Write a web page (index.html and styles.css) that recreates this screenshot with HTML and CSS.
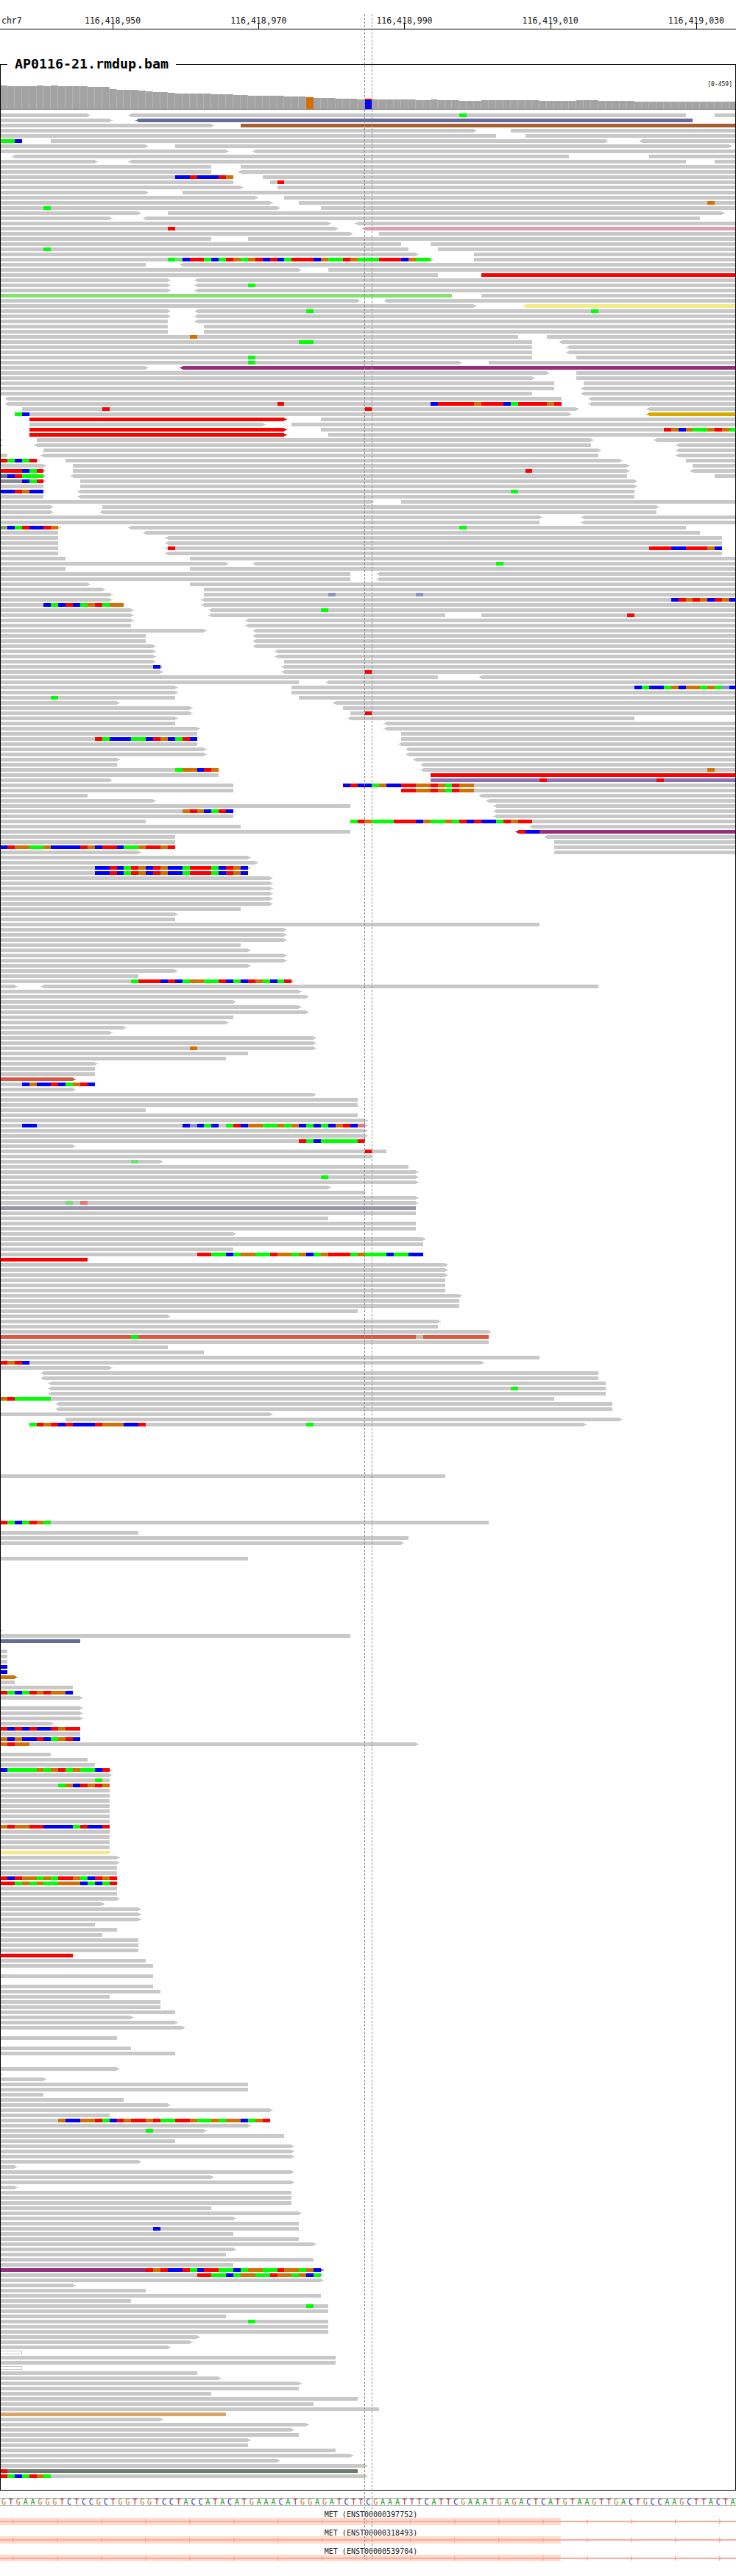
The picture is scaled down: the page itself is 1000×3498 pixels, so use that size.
FILE: index.html
```html
<!DOCTYPE html>
<html lang="en">
<head>
<meta charset="utf-8">
<title>AP0116-21.rmdup.bam</title>
<link rel="stylesheet" href="styles.css">
</head>
<body>
<main class="page">
  <header class="ruler">
    <span class="chrom">chr7</span>
    <span class="tick">116,418,950</span>
    <span class="tick">116,418,970</span>
    <span class="tick">116,418,990</span>
    <span class="tick">116,419,010</span>
    <span class="tick">116,419,030</span>
  </header>
  <section class="track">
    <h1 class="track-title">AP0116-21.rmdup.bam</h1>
    <span class="range">[0-459]</span>
    <svg id="coverage" class="coverage" width="998" height="61"></svg>
    <svg id="reads" class="reads" width="998" height="3213"></svg>
  </section>
  <div id="sequence" class="sequence"></div>
  <div class="transcript">
    <div class="gene-label">MET (ENST00000397752)</div>
    <svg class="gene" width="1000" height="10"></svg>
  </div>
  <div class="transcript">
    <div class="gene-label">MET (ENST00000318493)</div>
    <svg class="gene" width="1000" height="10"></svg>
  </div>
  <div class="transcript">
    <div class="gene-label">MET (ENST00000539704)</div>
    <svg class="gene gene-short" width="1000" height="9"></svg>
  </div>
  <div class="cursor cursor-a"></div>
  <div class="cursor cursor-b"></div>
</main>
<script src="app.js"></script>
</body>
</html>
```
FILE: styles.css
```css
html, body { margin: 0; padding: 0; background: #fff; }
.page {
  position: relative;
  width: 1000px;
  height: 3498px;
  overflow: hidden;
  background: #fff;
}
.ruler {
  display: flex;
  height: 39px;
  border-bottom: 1px solid #000;
  font: 11.5px/1 "DejaVu Sans Mono", monospace;
  color: #111;
}
.chrom {
  flex: 0 0 54px;
  padding: 23px 0 0 2px;
  box-sizing: border-box;
}
.tick {
  position: relative;
  flex: 0 0 198.2px;
  padding-top: 23px;
  box-sizing: border-box;
  text-align: center;
  white-space: nowrap;
}
.tick::after {
  content: "";
  position: absolute;
  left: 50%;
  bottom: 0;
  width: 1px;
  height: 7px;
  background: #000;
}
.track {
  position: relative;
  margin-top: 47px;
  height: 3295px;
  box-sizing: border-box;
  border: 1px solid #000;
}
.track-title {
  position: absolute;
  left: 9px;
  top: -13px;
  margin: 0;
  padding: 0 10px;
  background: #fff;
  font: bold 18.3px/24px "DejaVu Sans Mono", monospace;
  color: #000;
  white-space: nowrap;
}
.range {
  position: absolute;
  right: 4px;
  top: 22px;
  font: 8px/10px "DejaVu Sans Mono", monospace;
  color: #111;
}
.coverage, .reads { display: block; shape-rendering: crispEdges; }
.reads { margin-top: 5px; }
.sequence {
  display: flex;
  margin-top: 10px;
  height: 9px;
  border-top: 1px solid #aaa;
  border-bottom: 1px solid #aaa;
  font: 10px/9px "DejaVu Sans Mono", monospace;
}
.base { flex: 0 0 9.91px; text-align: center; }
.base-A { color: #1d9a1d; }
.base-C { color: #2a2aa5; }
.base-G { color: #a9752f; }
.base-T { color: #b02020; }
.transcript { margin-top: 5px; }
.sequence + .transcript { margin-top: 6px; }
.gene-label {
  height: 10px;
  font: 10px/12px "DejaVu Sans Mono", monospace;
  color: #222;
  text-align: center;
  padding-left: 8px;
  white-space: nowrap;
}
.gene { display: block; }
.cursor {
  position: absolute;
  top: 19px;
  width: 1px;
  height: 3456px;
  background: repeating-linear-gradient(to bottom, #868686 0, #868686 3px, transparent 3px, transparent 5px);
}
.cursor-a { left: 495px; }
.cursor-b { left: 505px; background: repeating-linear-gradient(to bottom, #969696 0, #969696 3px, transparent 3px, transparent 5px); }
```
FILE: app.js
```js
var W = 9.91;
var PAL = {r:'#ff0000',g:'#00ff00',b:'#0000ff',o:'#d17105',L:'#6ee26e',P:'#8f8fd6',K:'#e87878',T:'#c8b8a0',S:'#667088',Y:'#8b8b9e',O:'#88a070'};
var READ = {pu:'#962e80',pk:'#dda0b4',br:'#a65e2e',sl:'#666b9b',go:'#d9ab00',lg:'#85e070',re:'#ff0000',ye:'#f3ea8c',la:'#8a73b8',lr:'#de5540',gp:'#9a94aa',ta:'#dca36a',dg:'#6b7a6b',og:'#d17105',bl:'#0000ff',rg:'#ff0000'};
var GRAY = '#c8c8c8';

/* rows 0-14 and 51+ are written in 1/1.568 px units, rows 15-50 in whole bases */
var UNITS = {
0:'0-188> <278-1460 978:g 1521-E',1:'0-234> <295-1475=sl',2:'0-450> 513-E=br',3:'0-1010> 1087-E',4:'0-1055 1118-E',
5:'0-47 0:ggb 108-1290> <1365-E',6:'0-310> 373-1553>',7:'0-481> <544-E',8:'<31-1210 1381-E',9:'0-203> <280-1460 1521-E',
10:'0-450 513-E',11:'0-450 <513-E',12:'0-497 373:bbrbbbro 558-E',13:'0-497 574-E 590:r',14:'0-513> 590-E',
51:'0-1137> 1226-E',52:'0-1179 1242-E',53:'0-1179 <1242-E',54:'0-1134 <1242-E',55:'<16-1195 <1257-E',
56:'<16-1195 590:r 916:brrrrrorrrbgrrrror <1257-E',57:'47-1226> 218:r 777:r <1381-E',58:'31-1210> 31:gb <1381-E=go',
59:'63-605>=re 684-E',60:'63-560> 621-E',61:'63-605>=re 684-E 1413:roboggorog',62:'63-605>=re 699-E',
63:'0-0> 78-1260> <1397-E',64:'0-0> <78-1258 <1443-E',65:'93-1273> <1443-E',66:'0-16 <93-1273 <1443-E',
67:'0-78> 0:rgbgr 140-1322> 1460-E',68:'0-93> 155-1335> 1475-E',69:'0-93> 0:rrrbgr 155-1335> 1118:r <1475-E',
70:'0-93> 0:Sbrggg <155-1335 1521-E',71:'0-93> 0:YYYbgr 171-1350>',72:'0-93 171-1350>',73:'0-93 0:bbrobb <171-1350 1087:g',
74:'0-93 <171-1350',75:'0-793> 855-E',76:'0-109> 218-1397>',77:'0-109> <218-1397',78:'0-1149> <1242-E',79:'0-1149 <1242-E',
80:'0-124> 0:Obgrbbro <280-1460 978:g',81:'0-124 <310-1490',82:'0-124 <357-1537',83:'0-124 <357-1537',
84:'0-124 <357-1537 358:r 1381:rrrbbrrrob',85:'0-124 <357-1537',86:'0-140 403-E',87:'0-481> <544-E 1055:g',88:'0-140 403-E',
89:'0-745 <808-E',90:'0-745 <808-E',91:'0-187> 403-E',92:'0-218> 434-E',93:'0-234> 434-E 699:P 884:P',
94:'0-234> <434-E 1428:brorobrob',95:'0-263 93:bgbrbgorgoo <434-E',96:'0-280> <450-E 684:g',97:'0-280> <450-947 1024-E 1334:r',
98:'0-280> <528-E',99:'0-279 <528-E',100:'0-435> <544-E',101:'0-310 <544-E',102:'0-310 <544-E',103:'0-326> <544-E',
104:'0-326> <590-E',105:'0-326> <590-E',106:'0-326> 605-E',107:'0-342> 326:b <605-E',108:'0-342> <605-E 777:r',
109:'0-931 <1024-E',110:'0-637 <699-E',111:'0-373> 621-E 1350:bgbbgoboogogPb',112:'0-373> 621-E',113:'0-373 108:g 637-E',
114:'0-249> <714-E',115:'0-403> 730-E',116:'0-403> 745-E 777:r',117:'0-373> <745-1350',118:'0-373 <823-E',119:'0-419> <823-E',
120:'0-419 855-E',121:'0-419 202:rgbbbggbrobgrb 855-E',122:'0-419 <855-E',123:'0-435> <870-E',124:'0-435> <870-E',
125:'0-249> <885-E',126:'0-248 <900-E',127:'0-466 373:goobro <900-E 1506:o',128:'0-466 916-E=re',
129:'0-234> 916-E=la 1149:r 1397:r',130:'0-497 730-E 730:brbbgobbrroorogroo',131:'0-497 855-E 855:rroorogroo',
132:'0-187 <1024-E',133:'0-326> <1040-E',134:'0-745 <1056-E',135:'0-497 389:orobgrb <1056-E',136:'0-497 <1056-E',
137:'0-310 745-E 745:grogggrrrboggogrbrbbgrorr',138:'0-513 <1133-E',139:'0-745 <1102-E=pu 1102:rbb',140:'0-373 <1164-E',
141:'0-373 1179-E',142:'0-373 0:brooggobbbbrobrrbggorror 1179-E',143:'0-295> 1179-E',144:'0-528>',145:'0-544>',
146:'0-528> 202:bbrbgrobrobbgrrrgbrob',147:'0-528 202:bbrbgrobrobbgrrrgbrob',148:'0-574>',149:'0-574>',150:'0-574>',151:'0-574>',
152:'0-574>',153:'0-574>',154:'0-513',155:'0-373>',156:'0-373',
157:'0-1149',158:'0-605>',159:'0-605>',160:'0-605>',161:'0-513',162:'0-528>',163:'0-605>',164:'0-605>',165:'0-528>',166:'0-373>',167:'0-295',
168:'0-621> 279:grrrbrbgooggrbgbrogbgr',169:'0-31> <93-1273',170:'0-637>',171:'0-653>',172:'0-497>',173:'0-637>',174:'0-653>',175:'0-497',
176:'0-481>',177:'0-264>',178:'0-234>',179:'0-668>',180:'0-668>',181:'0-668> 403:o',182:'0-528',183:'0-481',184:'0-202>',185:'0-202',186:'0-202',
187:'0-155>=lr',188:'0-202 47:bobbrbgorb',189:'0-155>',190:'0-668>',191:'0-760',192:'0-760',193:'0-310',194:'0-760',195:'0-777>',
196:'0-777> 47:bb 389:bPbgb.grbooggogobgbgborbK',197:'0-777>',198:'0-777>',199:'0-777 637:rgbgggggr',200:'0-155>',201:'0-823 777:r',202:'0-792',
203:'0-342> 279:L',204:'0-869',205:'0-885>',206:'0-885> 684:g',207:'0-885>',208:'0-699>',209:'0-777',210:'0-885>',211:'0-885> 140:L 171:K',
212:'0-884=gp',213:'0-884',214:'0-699',215:'0-884',216:'0-884',217:'0-497>',218:'0-900>',219:'0-900',220:'0-497',
221:'0-900 419:rrggbgooggroogobgorrrgogggbggbb',222:'0-187=re',223:'0-947>',224:'0-947>',225:'0-947>',226:'0-947',227:'0-947',228:'0-947',
229:'0-978>',230:'0-978',231:'0-978',232:'0-760',233:'0-358>',234:'0-931>',235:'0-931',236:'0-1040>',237:'0-1040=lr 279:g 884:T',238:'0-1040',
239:'0-358',240:'0-434',241:'0-1149',242:'0-1025> 0:rorb',243:'0-234>',244:'<93-1273',245:'<93-1273',246:'<108-1289',247:'<108-1289 1087:g',248:'<108-1289',
249:'0-1179 0:orggggg',250:'<124-1305',251:'<124-1305',252:'0-574>',253:'140-1320>',254:'63-1243> 63:grorbrbbbrooobbr 652:g',
264:'0-947',273:'0-1040 0:rgbgrog',275:'0-295',276:'0-869',277:'0-855>',280:'0-528',294:'0-0>',295:'0-745',296:'0-171=sl',
298:'0-16',299:'0-16',300:'0-16',301:'0-16=bl',302:'0-16=bl',303:'0-31>=og',304:'0-31',305:'0-155',306:'0-155 0:rgbgroroob',307:'0-171>',
309:'0-171>',310:'0-171>',311:'0-171>',312:'0-108>',313:'0-171 0:rbrbrbbrorr',314:'0-171',315:'0-171 0:obobbrbgorb',316:'0-885> 0:oroo',
318:'0-108',319:'0-187',320:'0-202',321:'0-234> 0:bggggogorgoggbr',322:'0-234>',323:'0-234 202:g',324:'0-234 124:gobroro',
325:'0-234',326:'0-234',327:'0-234',328:'0-234',329:'0-234',330:'0-234',331:'0-234',332:'0-234 0:oroorrbbbbgrbbr',333:'0-234',334:'0-234',335:'0-234',336:'0-234',
337:'0-234=ye',338:'0-248>',339:'0-248>',340:'0-248',341:'0-248',342:'0-248 0:rbroogogrrogbror',343:'0-248 0:rrgogoggooobgbgr',344:'0-248',345:'0-248',346:'0-248>',
347:'0-218>',348:'0-295>',349:'0-295>',350:'0-295>',351:'0-202',352:'0-248',353:'0-218',354:'0-295',355:'0-295',356:'0-295',357:'0-155=re',358:'0-310',359:'0-326',361:'0-326',363:'0-326',
364:'0-342',365:'0-234',366:'0-342',367:'0-342',368:'0-373',369:'0-280>',370:'0-373>',371:'0-389>',373:'0-248',375:'0-279',376:'0-373',379:'0-248>',380:'0-0>',
381:'0-93>',382:'0-528',383:'0-528',384:'0-93',385:'0-263',386:'0-358>',387:'0-574>',388:'0-234',389:'0-574 124:obboorgbrorrorggrroggogoobgor',390:'0-528>',
391:'0-435> 310:g',392:'0-605',393:'0-373',394:'0-621>',395:'0-621>',396:'0-621>',397:'0-295>',398:'0-31>',399:'0-621>',400:'0-450>',401:'0-621>',402:'0-31>',
403:'0-621',404:'0-621',405:'0-621',406:'0-450',407:'0-637>',408:'0-497>',409:'0-637',410:'0-637 326:b',411:'0-497',412:'0-637',413:'0-668>',414:'0-497>',415:'0-481',
416:'0-668',417:'0-497',418:'0-684>=pu 310:rorbbrgbrrggbgooggroogob',419:'0-684> 419:rrggbgooggroogobg',420:'0-684>',421:'0-155>',422:'0-310',423:'0-684',424:'0-279',
425:'0-699 652:g',426:'0-699',427:'0-481',428:'0-699 528:g',429:'0-699',430:'0-699',431:'0-419>',432:'0-403>',433:'0-358>',434:'0-47=op',435:'0-713',436:'0-713',437:'0-47=op',
438:'0-419',439:'0-466>',440:'0-637>',441:'0-637',442:'0-450',443:'0-760',444:'0-668',445:'0-808',446:'0-481=ta',447:'0-342>',448:'0-653>',449:'0-621>',450:'0-637',
451:'0-528>',452:'0-528',453:'0-713',454:'0-745>',455:'0-590>',456:'0-777>',457:'0-760=dg 0:r',458:'0-777> 0:rgbgrog'
};
var BASES = {
15:'0-20> 25-E',16:'0-35> 39-E',17:'0-37> 41-E 97:o',18:'0-38> 6:g 44-E',19:'0-19> 23-99>',20:'0-15> <20-96',21:'0-45> <49-E',
22:'0-46> 23:r <50-E=pk',23:'0-48> 52-E',24:'0-29 34-E',25:'0-55 59-E',26:'0-56 6:g 60-E',27:'0-57> 65-E',
28:'0-59> 23:gLbrrgbgrogorbrbgrrrboggrogggrrrbogg 65-E',29:'0-20 <25-E',30:'0-41> 45-E',31:'0-60 66-E=re',32:'0-23> <27-E',
33:'0-23> <27-E 34:g',34:'0-23> <27-E',35:'0-62=lg 66-E',36:'0-49> <53-E',37:'0-65> <72-E=ye',38:'0-23> <27-E 42:g 81:g',39:'0-23> <27-E',
40:'0-23 <27-E',41:'0-23 28-E',42:'0-23 28-E',43:'0-71 26:o 75-E',44:'0-73 41:gg <77-E',45:'0-73 <78-E',46:'0-73 <78-E',47:'0-73 34:g 79-E',
48:'0-63> 34:g 67-E',49:'0-20> <25-E=pu',50:'0-75> 79-E'
};

function snap(k) { return Math.round(k * W); }
function rect(x, y, w, h, fill) {
  return '<rect x="' + (x - 1) + '" y="' + y + '" width="' + w + '" height="' + h + '" fill="' + fill + '"/>';
}
function drawRow(spec, row, unit) {
  var y = row * 7, out = '', top = '';
  spec.split(' ').forEach(function (tok) {
    var m = tok.match(/^(<?)(\d+)-(\d+|E)(>?)(?:=(\w+))?$/);
    if (m) {
      var s = Math.round(+m[2] / unit);
      var e = m[3] === 'E' ? 101 : Math.round(+m[3] / unit);
      var x0 = snap(s), x1 = Math.min(snap(e), 1001);
      var c = m[5] && READ[m[5]] ? READ[m[5]] : GRAY;
      if (m[5] === 'op') {
        out += rect(x0, y, x1 - x0, 5, GRAY) + rect(x0, y + 1, x1 - x0 - 1, 3, '#fff');
      } else if (x1 > x0) {
        out += rect(x0, y, x1 - x0, 5, c);
      }
      if (m[1]) out += rect(x0 - 2, y + 1, 2, 3, c) + rect(x0 - 4, y + 2, 2, 1, c);
      if (m[4]) out += rect(x1, y + 1, 2, 3, c) + rect(x1 + 2, y + 2, 2, 1, c);
      return;
    }
    var n = tok.match(/^(\d+):(.+)$/);
    if (n) {
      var k = Math.round(+n[1] / unit);
      n[2].split('').forEach(function (ch, i) {
        if (PAL[ch]) top += rect(snap(k + i), y, snap(k + i + 1) - snap(k + i), 5, PAL[ch]);
      });
    }
  });
  return out + top;
}

var html = '';
Object.keys(UNITS).forEach(function (r) { html += drawRow(UNITS[r], +r, 15.54); });
Object.keys(BASES).forEach(function (r) { html += drawRow(BASES[r], +r, 1); });
document.getElementById('reads').innerHTML = html;

/* coverage: [number of bases, top y in page px] */
var COV = [[1,116],[4,117.3],[1,116],[1,117.3],[1,116],[4,117.3],[3,118.3],[1,121],[3,122.3],[1,123.3],[1,124],[2,125],[1,126],[5,127],[3,128],[2,129],[5,130],[3,131],[1,132],[3,133],[3,134],[1,135],[1,134],[6,135],[2,136],[1,135],[3,136],[3,137],[8,136],[5,137],[3,136],[5,137],[15,138]];
var cov = '', k = 0;
COV.forEach(function (c) {
  for (var i = 0; i < c[0]; i++, k++) {
    var x = snap(k), w = snap(k + 1) - x, t = Math.round(c[1]), top = t - 88, h = 148 - t;
    if (k === 50) {
      cov += rect(x, top, w, 2, '#ff0000') + rect(x, top + 2, w, h - 2, '#0000ff');
    } else if (k === 42) {
      cov += rect(x, top, w, h, '#d17105');
    } else {
      cov += rect(x, top, w, h, '#a3a3a3');
      cov += rect(x + w - 1, top, 1, h, '#b4b4b4');
    }
  }
});
cov += rect(0, 60, 1001, 1, '#7a7a7a');
document.getElementById('coverage').innerHTML = cov;

/* reference sequence */
var seq = 'GTGAAGGGTCTCCGCTGGTGGTCCTACCATACATGAAACATGGAGATCTTCGAAATTTCATTCGAAATGAGACTCATGTAAGTTGACTGCCAAGCTTACTA';
document.getElementById('sequence').innerHTML = seq.split('').map(function (b) {
  return '<span class="base base-' + b + '">' + b + '</span>';
}).join('');

/* transcripts: coding band, thin line, strand chevrons */
Array.prototype.forEach.call(document.querySelectorAll('.gene'), function (svg) {
  var h = +svg.getAttribute('height'), mid = 5, s = '';
  s += '<rect x="0" y="0" width="762" height="' + h + '" fill="#ffdccc"/>';
  s += '<rect x="0" y="' + (mid - 1) + '" width="1000" height="2" fill="#ffa89c"/>';
  for (var x = 17; x < 1000; x += 60) {
    s += '<polygon points="' + x + ',' + (mid - 4) + ' ' + (x + 3) + ',' + mid + ' ' + x + ',' + (mid + 4) + '" fill="#ffa89c"/>';
  }
  svg.innerHTML = s;
});
```
